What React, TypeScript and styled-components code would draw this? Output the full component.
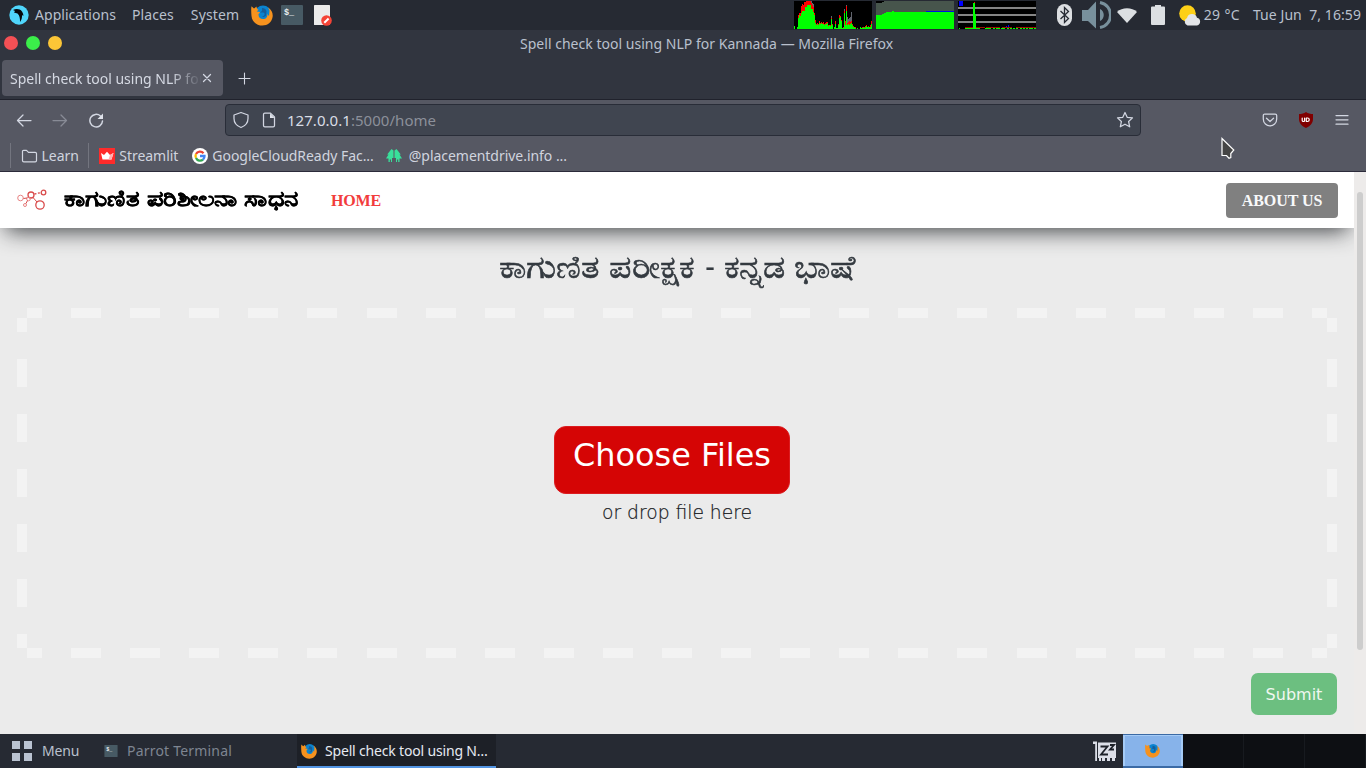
import React from "react";
import styled, { createGlobalStyle } from "styled-components";

const Global = createGlobalStyle`
  * { box-sizing: border-box; }
  body { margin: 0; overflow: hidden; }
  svg { display: block; flex: none; }
`;

const Desktop = styled.div`
  position: relative;
  width: 1366px;
  height: 768px;
  display: flex;
  flex-direction: column;
  overflow: hidden;
  background: #262a33;
  font: 14px/20px "Noto Sans", sans-serif;
  color: #b9c0cd;
  white-space: pre;
`;

/* desktop top panel */
const Panel = styled.header`
  height: 30px;
  display: flex;
  align-items: center;
  padding: 0 5px 0 8px;
  background: #262a33;
`;
const PanelItem = styled.span<{ $gap: number; $track?: number }>`
  margin-left: ${(p) => p.$gap}px;
  letter-spacing: ${(p) => p.$track ?? 0}px;
`;
const Launchers = styled.div`
  display: flex;
  align-items: center;
  gap: 8px;
  margin-left: 12px;
`;
const Monitors = styled.div`
  display: flex;
  gap: 4px;
  margin-left: auto;
`;
const Tray = styled.div`
  display: flex;
  align-items: center;
  margin-left: 20px;
`;
const TrayIcon = styled.span<{ $w: number }>`
  width: ${(p) => p.$w}px;
  display: flex;
`;

/* browser window */
const TitleBar = styled.div`
  height: 30px;
  display: flex;
  align-items: center;
  padding: 0 4px 4px;
  background: #31353f;
`;
const Dots = styled.div`
  display: flex;
  gap: 8px;
  flex: none;
`;
const Dot = styled.i<{ $c: string }>`
  width: 14px;
  height: 14px;
  border-radius: 50%;
  background: ${(p) => p.$c};
`;
const WindowTitle = styled.div`
  margin: 2px 0 0 458px;
  letter-spacing: 0.02px;
`;
const TabBar = styled.div`
  height: 40px;
  display: flex;
  align-items: center;
  padding: 0 2px 3px;
  background: #31353f;
  border-bottom: 1px solid #20222c;
`;
const Tab = styled.div`
  width: 221px;
  height: 36px;
  display: flex;
  align-items: center;
  padding: 0 11px 0 8px;
  border-radius: 4px;
  background: #565863;
  color: #d5d9e3;
`;
const TabText = styled.span`
  width: 192px;
  padding-top: 2px;
  mask-image: linear-gradient(90deg, #000 160px, transparent 192px);
`;
const NewTab = styled.span`
  margin-left: 15px;
`;
const Toolbar = styled.div`
  height: 40px;
  display: flex;
  align-items: center;
  padding: 0 16px 0 16px;
  background: #565863;
`;
const NavButtons = styled.div`
  display: flex;
  gap: 20px;
`;
const UrlBar = styled.div`
  width: 916px;
  height: 32px;
  display: flex;
  align-items: center;
  margin-left: 120px;
  padding: 0 6px;
  border: 1px solid #292d38;
  border-radius: 4px;
  background: #404550;
  color: #d9dde6;
  font-size: 15px;
`;
const UrlText = styled.span`
  flex: 1;
  margin-left: 11px;
  letter-spacing: 0.04px;
`;
const UrlPath = styled.span`
  color: #8c909a;
`;
const Actions = styled.div`
  display: flex;
  align-items: center;
  gap: 20px;
  margin-left: auto;
`;
const Bookmarks = styled.div`
  height: 32px;
  display: flex;
  align-items: center;
  padding-left: 10px;
  background: #565863;
  border-bottom: 1px solid #2b2a3a;
  color: #d0d4df;
`;
const Bookmark = styled.div<{ $left: number; $gap?: number }>`
  display: flex;
  align-items: center;
  gap: ${(p) => p.$gap ?? 4}px;
  margin-left: ${(p) => p.$left}px;
  letter-spacing: -0.04px;
`;
const Rule = styled.i<{ $left?: number }>`
  width: 1px;
  height: 25px;
  margin-left: ${(p) => p.$left ?? 0}px;
  background: #73757f;
`;

/* web page */
const Viewport = styled.div`
  height: 562px;
  display: flex;
`;
const Page = styled.main`
  position: relative;
  width: 1354px;
  display: flex;
  flex-direction: column;
  overflow: hidden;
  background: #ebebeb;
`;
const ScrollTrack = styled.div`
  width: 12px;
  padding: 20px 3px 0;
  background: #edebea;
`;
const ScrollThumb = styled.div`
  height: 458px;
  border-radius: 3px;
  background: #cdcdcd;
`;
const SiteNav = styled.nav`
  height: 56px;
  flex: none;
  display: flex;
  align-items: center;
  padding: 0 16px 0 17px;
  background: #fff;
  box-shadow: 0 9px 22px -6px rgba(30, 34, 38, 0.85);
`;
const Brand = styled.span`
  margin: -6px 0 0 16px;
  width: 235px;
  color: #000;
  font: bold 22px/32px "Noto Sans", sans-serif;
  -webkit-text-stroke: 0.3px #000;
  transform: scaleX(1.168);
  transform-origin: left;
`;
const HomeLink = styled.a`
  margin: 2px 0 0 32px;
  color: #f23c3c;
  font: bold 16px/24px "Liberation Serif", serif;
  letter-spacing: -0.15px;
`;
const AboutButton = styled.button`
  width: 112px;
  height: 35px;
  margin-left: auto;
  padding: 2px 0 0;
  border: 0;
  border-radius: 4px;
  background: #808080;
  color: #f8f9fa;
  font: bold 16px/24px "Liberation Serif", serif;
  letter-spacing: -0.05px;
`;
const Heading = styled.h1`
  margin: 16px 0 0;
  height: 64px;
  text-align: center;
  color: #343a40;
  font: 32px/44px "Noto Sans", sans-serif;
  -webkit-text-stroke: 0.6px #343a40;
  transform: scaleX(1.095);
`;
const Hyphen = styled.span`
  display: inline-block;
  -webkit-text-stroke: 0;
  transform: translateX(1px) scaleX(0.85);
`;
const dash = "#f3f3f3";
const across = `repeating-linear-gradient(90deg, ${dash} 0 15px, transparent 15px 44.09px, ${dash} 44.09px 59.09px)`;
const down = `repeating-linear-gradient(180deg, ${dash} 0 14px, transparent 14px 41px, ${dash} 41px 55px)`;
const DropZone = styled.section`
  width: 1320px;
  height: 350px;
  margin-left: 17px;
  display: flex;
  flex-direction: column;
  align-items: center;
  padding-top: 118px;
  background:
    ${across} 10px 0 / 1300px 10px no-repeat,
    ${across} 10px 340px / 1300px 10px no-repeat,
    ${down} 0 10px / 10px 330px no-repeat,
    ${down} 1310px 10px / 10px 330px no-repeat;
`;
const ChooseButton = styled.button`
  width: 236px;
  height: 68px;
  margin-right: 10px;
  padding: 0 0 10px;
  border: 1px solid #dc1c20;
  border-radius: 12px;
  background: #d50505;
  color: #fff;
  font: 31.9px/38px "DejaVu Sans", sans-serif;
`;
const DropHint = styled.p`
  margin: 7px 0 0;
  color: #16191c;
  font: 300 18.7px/24px "DejaVu Sans", sans-serif;
  -webkit-text-stroke: 0.2px #16191c;
`;
const SubmitButton = styled.button`
  width: 86px;
  height: 42px;
  margin: 15px 17px 0 auto;
  padding: 2px 0 0;
  border: 0;
  border-radius: 7px;
  background: #6cbf80;
  color: #f0f7f1;
  font: 16px/24px "DejaVu Sans", sans-serif;
`;

/* bottom panel */
const TaskBar = styled.footer`
  height: 34px;
  display: flex;
  align-items: center;
  padding-left: 12px;
  background: #262a33;
`;
const MenuGrid = styled.span`
  display: grid;
  grid-template-columns: 8px 8px;
  grid-auto-rows: 8px;
  gap: 4px;
`;
const Square = styled.i`
  background: #bac3d1;
`;
const MenuLabel = styled.span`
  width: 62px;
  margin-left: 10px;
  letter-spacing: -0.15px;
`;
const Task = styled.div<{ $w: number; $active?: boolean }>`
  width: ${(p) => p.$w}px;
  height: 34px;
  display: flex;
  align-items: center;
  padding-left: ${(p) => (p.$active ? 4 : 0)}px;
  gap: ${(p) => (p.$active ? 8 : 9)}px;
  background: ${(p) => (p.$active ? "#1d2027" : "none")};
  color: ${(p) => (p.$active ? "#e6eaf2" : "#7e8591")};
  letter-spacing: ${(p) => (p.$active ? -0.17 : 0.2)}px;
  box-shadow: ${(p) => (p.$active ? "inset 0 -2px #5294e2" : "none")};
`;
const Workspaces = styled.div`
  display: flex;
  margin-left: 7px;
`;
const Workspace = styled.div<{ $active?: boolean }>`
  width: ${(p) => (p.$active ? 60 : 61)}px;
  height: 34px;
  display: flex;
  align-items: center;
  justify-content: center;
  padding: 0 2px 2px 0;
  background: ${(p) => (p.$active ? "#87b3ea" : "#0d0f13")};
  box-shadow: ${(p) =>
    p.$active ? "inset 0 1px #3b6aa5, inset 0 -2px #3b6aa5, inset 0 0 0 2px #a5cbf6" : "inset -1px 0 #171a1f"};
`;
const TaskIcon = styled.span`
  margin-left: auto;
`;
const Pointer = styled.svg`
  position: absolute;
  left: 1221px;
  top: 137px;
`;

const Firefox = ({ size }: { size: number }) => (
  <svg width={size} height={size} viewBox="0 0 22 22">
    <circle cx="12" cy="9.5" r="8" fill="#0a84d0" />
    <path
      fill="#f6921e"
      d="M.5 2.200 3 4.500l2.500-2c.1 1.600.7 2.700 2 3.200L5.700 7.500l3 .5c.7.7-.2 1.400-1 1.800-.8 3.200 1.800 5.500 4.900 5.200 2.700-.3 4.200-2.500 3.700-5.100L18 12l.5-5.500-1.500-3c4 2.300 5.100 6.200 4.600 9.500-.8 5-5 8.500-10.200 8.500S1 18 .5 12C.2 8 0 5.200.5 2.200Z"
    />
    <path fill="#155e9b" d="M11 4c2 .2 4 .8 4.500 3l-.3 4c-1 2.500-3.700 2-4.200 1.500 2-.4 2.800-1.500 2.500-3-.8-1.700-2.500-.7-4.500-1 1.600-.7 2.500-2 2-4.500Z" />
  </svg>
);
const Terminal = ({ w, h }: { w: number; h: number }) => (
  <svg width={w} height={h} viewBox="0 0 22 20">
    <rect width="22" height="20" rx="1" fill="#475a64" />
    <text x="3" y="10" fill="#eceff1" fontFamily="Liberation Mono" fontWeight="bold" fontSize="8.500">$_</text>
  </svg>
);
const Parrot = () => (
  <svg width="21" height="20" viewBox="0 0 21 20">
    <circle cx="11" cy="10" r="9.700" fill="#4fd5fb" />
    <path d="M5 5c3-1.500 7-1.200 9 1.500 1 1.500 1.500 3 1.300 4.500l-1.300-1c.2 3-.5 5-2 7 .2-4-.5-6.500-2.500-8.500L6 7.500l1-1.400Z" fill="#07090c" />
  </svg>
);
const EditorIcon = styled.svg`
  margin-left: 2px;
`;
const Editor = () => (
  <EditorIcon width="19" height="22" viewBox="0 0 19 22">
    <rect x="1" y="1" width="16" height="20" rx=".6" fill="#ebebeb" />
    <circle cx="13.500" cy="16.500" r="5.300" fill="#f44336" />
    <path d="m11.300 18.800 4.300-4.300" stroke="#fff" strokeWidth="2" />
  </EditorIcon>
);

const cpuGreen = [3, 0, 0, 2, 11, 14, 13, 16, 18, 18, 18, 22, 22, 24, 24, 24, 24, 20, 20, 17, 14, 6, 4, 5, 4, 6, 5, 6, 5, 5, 4, 5, 5, 6, 3, 4, 3, 10, 4, 0, 2, 5, 1, 1, 4, 11, 12, 8, 1, 1, 16, 4, 18, 4, 5, 4, 5, 6, 4, 2, 2, 1, 0, 1, 0, 0, 2, 1, 1, 2, 1, 2, 3, 2, 2, 2, 2, 5];
const cpuRed = [0, 0, 0, 0, 3, 2, 3, 7, 7, 6, 9, 5, 6, 4, 4, 4, 4, 6, 4, 5, 2, 3, 1, 1, 1, 2, 1, 1, 1, 2, 1, 1, 2, 1, 1, 0, 1, 1, 1, 0, 0, 3, 0, 0, 1, 3, 1, 1, 0, 1, 2, 4, 5, 2, 2, 4, 2, 2, 1, 1, 0, 1, 0, 0, 0, 0, 0, 0, 1, 0, 1, 1, 1, 0, 1, 0, 2, 3];
const cpuGray: Record<number, number> = { 15: 1, 16: 1, 17: 2, 18: 2, 19: 3, 37: 2, 50: 2, 52: 1, 53: 6, 54: 3, 55: 3, 56: 5, 57: 9 };

const CpuGraph = () => (
  <svg width="78" height="28" shapeRendering="crispEdges">
    <rect width="78" height="28" fill="#000" />
    {cpuGreen.map((g, i) => (
      <g key={i}>
        <rect x={i} y={28 - g} width="1" height={g} fill="#0f0" />
        <rect x={i} y={28 - g - cpuRed[i]} width="1" height={cpuRed[i]} fill="#f00" />
        <rect x={i} y={28 - g - cpuRed[i] - (cpuGray[i] ?? 0)} width="1" height={cpuGray[i] ?? 0} fill="#62656e" />
      </g>
    ))}
  </svg>
);
const MemoryGraph = () => (
  <svg width="78" height="28" shapeRendering="crispEdges">
    <rect width="78" height="28" fill="#47554c" />
    <path d="M0 0h8v1H6v1H0Z" fill="#000" />
    <path d="M0 14h6v-1h2v-1h2v-1h6v-1h2v1h60v17H0Z" fill="#0f0" />
    <rect x="50" y="10" width="28" height="1" fill="#0010e0" />
  </svg>
);
const ticks = [7, 9, 11, 13, 18, 20, 27, 29, 31, 35, 38, 40, 43, 45, 49, 52, 55, 58, 62, 65, 68, 71, 73, 76];
const NetGraph = () => (
  <svg width="78" height="28" shapeRendering="crispEdges">
    <rect width="78" height="28" fill="#000" />
    {[6, 13, 20].map((y) => (
      <rect key={y} y={y} width="78" height="2" fill="#858585" />
    ))}
    <rect x="1" width="4" height="5" fill="#00f" />
    <rect x="1" y="27" width="1" height="1" fill="#0f0" />
    <path d="M7 26h20v1H7zM28 26h14v1H28zM44 26h10v1H44zM58 26h20v1H58z" fill="#a01000" />
    {ticks.map((x) => (
      <rect key={x} x={x} y="27" width="2" height="1" fill="#0f0" />
    ))}
    <path d="M15 2h2v11h1v15h-3Z" fill="#0f0" />
    <rect x="16" y="1" width="1" height="1" fill="#f00" />
    <path d="M48 25h1v1h-1zM50 24h1v2h-1z" fill="#00f" />
  </svg>
);

const stroke = { fill: "none", stroke: "#d3d7e2", strokeWidth: 1.25, strokeLinecap: "round", strokeLinejoin: "round" } as const;

export default function App() {
  return (
    <>
      <Global />
      <Desktop>
        <Panel>
          <Parrot />
          <PanelItem $gap={6} $track={0.04}>Applications</PanelItem>
          <PanelItem $gap={16} $track={0.1}>Places</PanelItem>
          <PanelItem $gap={17} $track={0.15}>System</PanelItem>
          <Launchers>
            <Firefox size={22} />
            <Terminal w={22} h={20} />
            <Editor />
          </Launchers>
          <Monitors>
            <CpuGraph />
            <MemoryGraph />
            <NetGraph />
          </Monitors>
          <Tray>
            <TrayIcon $w={26}>
              <svg width="17" height="22" viewBox="0 0 17 22">
                <rect x="1" width="15" height="22" rx="7.500" fill="#dcdfe2" />
                <path d="m4.500 7 8 7.500-4 4V3.500l4 4-8 7.500" fill="none" stroke="#262a33" strokeWidth="1.300" />
              </svg>
            </TrayIcon>
            <TrayIcon $w={35}>
              <svg width="29" height="28" viewBox="0 0 29 28" fill="#78909c">
                <path d="M0 9h6l8-8.500v27L6 20H0ZM18 8c5 2 5 10 0 12Z" />
                <path d="M18 1.500c14 2.500 14 22.500 0 25" fill="none" stroke="#78909c" strokeWidth="3" />
              </svg>
            </TrayIcon>
            <TrayIcon $w={34}>
              <svg width="20" height="15" viewBox="0 0 20 15" fill="#dcdfe2">
                <path d="M0 4C5-1 15-1 20 4L10 15Z" />
              </svg>
            </TrayIcon>
            <TrayIcon $w={28}>
              <svg width="14" height="20" viewBox="0 0 14 20" fill="#dcdfe2">
                <path d="M4 0h6v1.500h3q1 0 1 1V19q0 1-1 1H1q-1 0-1-1V2.500q0-1 1-1h3Z" />
              </svg>
            </TrayIcon>
            <svg width="22" height="21" viewBox="0 0 22 21">
              <circle cx="8.500" cy="8.500" r="8.300" fill="#fdd017" />
              <path d="M8.500 20.500a4 4 0 0 1-.5-7.400 5.200 5.200 0 0 1 10-.4 4 4 0 0 1 0 7.800Z" fill="#e3e5e8" />
            </svg>
            <PanelItem $gap={3} $track={0.35}>29 °C</PanelItem>
          </Tray>
          <PanelItem $gap={13} $track={0.07}>Tue Jun  7, 16:59</PanelItem>
        </Panel>

        <TitleBar>
          <Dots>
            <Dot $c="#f45055" />
            <Dot $c="#3bee4a" />
            <Dot $c="#fcc637" />
          </Dots>
          <WindowTitle>Spell check tool using NLP for Kannada — Mozilla Firefox</WindowTitle>
        </TitleBar>

        <TabBar>
          <Tab>
            <TabText>Spell check tool using NLP for</TabText>
            <svg width="10" height="10" viewBox="0 0 10 10">
              <path d="m1.500 1.500 7 7M8.500 1.500l-7 7" {...stroke} />
            </svg>
          </Tab>
          <NewTab>
            <svg width="13" height="13" viewBox="0 0 13 13">
              <path d="M6.500 1v11M1 6.500h11" {...stroke} strokeWidth="1.100" />
            </svg>
          </NewTab>
        </TabBar>

        <Toolbar>
          <NavButtons>
            <svg width="16" height="16" viewBox="0 0 16 16">
              <path d="M7 3 1.500 8.500 7 14M1.500 8.500H15" {...stroke} />
            </svg>
            <svg width="16" height="16" viewBox="0 0 16 16" opacity=".4">
              <path d="m9 3 5.500 5.500L9 14M14.500 8.500H1" {...stroke} />
            </svg>
            <svg width="17" height="16" viewBox="0 0 17 16">
              <path d="M14.500 9A6.300 6.300 0 1 1 12.500 4L14 5.500" {...stroke} strokeWidth="1.500" />
              <path d="M15 1.500V7H9.500Z" fill="#dfe2ea" />
            </svg>
          </NavButtons>
          <UrlBar>
            <svg width="18" height="18" viewBox="0 0 18 18">
              <path d="M9 1.500 16 4v3.500c0 4.500-3 7.500-7 9-4-1.500-7-4.500-7-9V4Z" {...stroke} />
            </svg>
            <svg width="26" height="16" viewBox="-12 0 26 16">
              <path d="M1.500 2.500q0-1.300 1.300-1.300H8.500l4 3.800v8.500q0 1.300-1.300 1.300H2.800q-1.300 0-1.300-1.300Z" {...stroke} />
              <path d="M8 1.500V6h4.500Z" fill="#dfe2ea" />
            </svg>
            <UrlText>
              127.0.0.1<UrlPath>:5000/home</UrlPath>
            </UrlText>
            <svg width="18" height="18" viewBox="0 0 18 18">
              <path d="m9 1.500 2.200 4.800 5.300.6-3.900 3.600 1.100 5.300L9 13.200l-4.700 2.600 1.100-5.300L1.500 6.900l5.300-.6Z" {...stroke} />
            </svg>
          </UrlBar>
          <Actions>
            <svg width="16" height="16" viewBox="0 0 16 16">
              <path d="M2.800 2h10.400q1.500 0 1.500 1.500V7c0 9-13.400 9-13.400 0V3.500Q1.300 2 2.800 2ZM4.500 6.200 8 9.500l3.500-3.300" {...stroke} />
            </svg>
            <svg width="16" height="16" viewBox="0 0 16 16">
              <path d="M8 0c2 1.500 4.500 2 7 2v5c0 4.500-3 7-7 9-4-2-7-4.500-7-9V2c2.500 0 5-.5 7-2Z" fill="#800000" />
              <path d="M4.200 6v2.500q0 1 1.200 1t1.200-1V6M8.300 6v3.500h1.200a1.750 1.750 0 0 0 0-3.500Z" {...stroke} stroke="#fff" strokeWidth="1.200" />
            </svg>
            <svg width="16" height="16" viewBox="0 0 16 16">
              <path d="M2 3.500h12M2 7.800h12M2 12.200h12" {...stroke} />
            </svg>
          </Actions>
        </Toolbar>

        <Bookmarks>
          <Rule />
          <Bookmark $left={10} $gap={3.5}>
            <svg width="17" height="16" viewBox="0 0 17 16">
              <path d="M1.500 12.500V3.300q0-1 1-1h3l2 2h6.700q1.300 0 1.300 1.300v7q0 1.300-1.300 1.300H2.800q-1.300 0-1.300-1.400Z" {...stroke} strokeWidth="1.200" />
            </svg>
            Learn
          </Bookmark>
          <Rule $left={9.5} />
          <Bookmark $left={10}>
            <svg width="16" height="16" viewBox="0 0 16 16">
              <rect width="16" height="16" fill="#ff2b2b" />
              <path d="m2 5 3 2 3-3.300L11 7l3.500-2-2 6.500h-9Z" fill="#fff" />
              <path d="m11 7 3.500-2-2 6.500-3 0Z" fill="#ffb0b0" />
            </svg>
            Streamlit
          </Bookmark>
          <Bookmark $left={13.5} $gap={4.500}>
            <svg width="16" height="16" viewBox="0 0 16 16" fill="none" strokeWidth="2.300">
              <circle cx="8" cy="8" r="8" fill="#fff" />
              <path d="M11.500 5.200A4.500 4.500 0 0 0 4 6" stroke="#ea4335" />
              <path d="M4 6a4.500 4.500 0 0 0 0 4" stroke="#fbbc05" />
              <path d="M4 10a4.500 4.500 0 0 0 7 1.600" stroke="#34a853" />
              <path d="M11 11.600A4.500 4.500 0 0 0 12.500 8H8" stroke="#4285f4" />
            </svg>
            GoogleCloudReady Fac...
          </Bookmark>
          <Bookmark $left={12} $gap={7}>
            <svg width="16" height="16" viewBox="0 0 16 16" fill="#39e09b">
              <path d="M5.500 1 7.500 2.500v7.500H6V14H5v-2.500H3.800V14H2.500v-3.500H0L2.500 6.500H1.200ZM10.500 1l-2 1.500v7.500H10V14h1v-2.500h1.200V14h1.300v-3.500H16l-2.500-4h1.300Z" />
            </svg>
            @placementdrive.info ...
          </Bookmark>
        </Bookmarks>

        <Viewport>
          <Page>
            <SiteNav>
              <svg width="31" height="22" viewBox="0 0 31 22" fill="none" stroke="#d94a4a">
                <circle cx="3.500" cy="9" r="2.800" stroke="#e88484" />
                <circle cx="14" cy="6" r="3" strokeWidth="1.300" />
                <circle cx="26.500" cy="3.500" r="2.300" strokeWidth="1.300" />
                <circle cx="23" cy="16" r="4.200" strokeWidth="1.300" />
                <circle cx="8" cy="16" r="1.500" stroke="#e88484" />
                <circle cx="11.500" cy="10" r="1.800" stroke="#e88484" />
                <path d="M6.500 9.500 10 9M9 14.500l1.500-3M16 8.500l4 4.500" />
                <path d="m17.500 5 6.500-1.500" strokeDasharray="2 1.500" strokeWidth="1.300" />
              </svg>
              <Brand>ಕಾಗುಣಿತ ಪರಿಶೀಲನಾ ಸಾಧನ</Brand>
              <HomeLink>HOME</HomeLink>
              <AboutButton>ABOUT US</AboutButton>
            </SiteNav>
            <Heading>
              ಕಾಗುಣಿತ ಪರೀಕ್ಷಕ <Hyphen>-</Hyphen> ಕನ್ನಡ ಭಾಷೆ
            </Heading>
            <DropZone>
              <ChooseButton>Choose Files</ChooseButton>
              <DropHint>or drop file here</DropHint>
            </DropZone>
            <SubmitButton>Submit</SubmitButton>
          </Page>
          <ScrollTrack>
            <ScrollThumb />
          </ScrollTrack>
        </Viewport>

        <TaskBar>
          <MenuGrid>
            <Square />
            <Square />
            <Square />
            <Square />
          </MenuGrid>
          <MenuLabel>Menu</MenuLabel>
          <Task $w={193}>
            <Terminal w={14} h={12} />
            <span>Parrot Terminal</span>
          </Task>
          <Task $w={199} $active>
            <Firefox size={16} />
            <span>Spell check tool using N…</span>
          </Task>
          <TaskIcon>
            <svg width="23" height="21" viewBox="0 0 23 21">
              <path d="M0 .5h4V20H2.200V3H0ZM5 1.500h18V17h-1v3h-3v-3h-2v3h-3v-3h-2v3H9v-3H8v3H6v-3H5Z" fill="#dcdfe8" />
              <path d="M7.500 5.500h7L8 13.500h7M17 4h4l-4 4.500h4" fill="none" stroke="#1d2129" strokeWidth="1.800" />
            </svg>
          </TaskIcon>
          <Workspaces>
            <Workspace $active>
              <Firefox size={15} />
            </Workspace>
            <Workspace />
            <Workspace />
            <Workspace />
          </Workspaces>
        </TaskBar>
        <Pointer width="14" height="23" viewBox="0 0 14 23">
          <path d="M1 1.500V18.500h4.500l2.500 2.700 1.800-.7v-4L12.800 13Z" fill="#454545" stroke="#fff" strokeWidth="1.200" />
        </Pointer>
      </Desktop>
    </>
  );
}
